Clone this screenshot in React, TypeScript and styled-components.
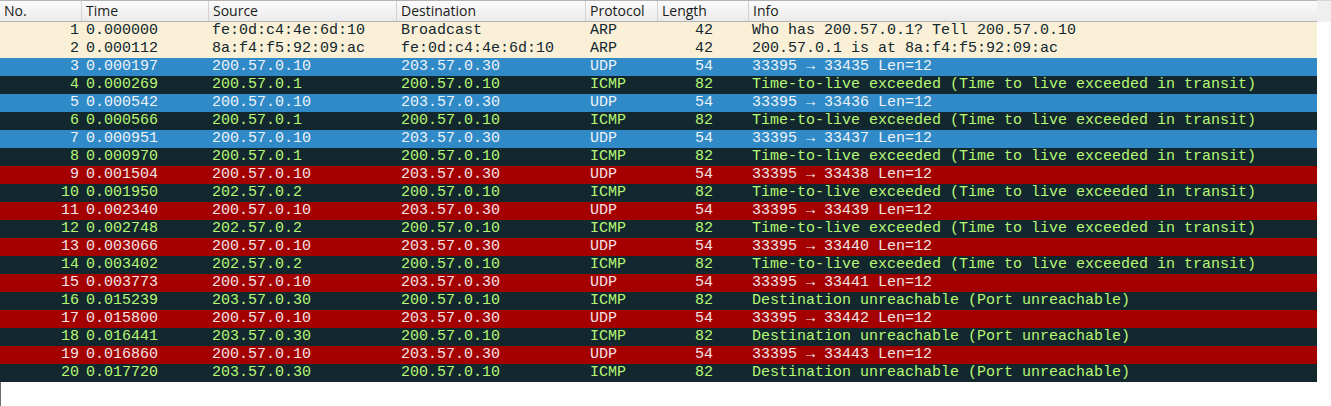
import React from 'react';
import styled, { createGlobalStyle } from 'styled-components';

const GlobalStyle = createGlobalStyle`
  html, body {
    margin: 0;
    padding: 0;
    background: #ffffff;
  }
`;

type Kind = 'arp' | 'udp' | 'icmp' | 'ttl';

const palette: Record<Kind, { bg: string; fg: string }> = {
  arp: { bg: '#faf0d7', fg: '#12272e' },
  udp: { bg: '#2f8ac7', fg: '#eef3f8' },
  icmp: { bg: '#12272e', fg: '#b7f774' },
  ttl: { bg: '#a40000', fg: '#f3e3e6' },
};

const columns = '82px 127px 188px 189px 72px 91px 568px';

const Page = styled.div`
  width: 1331px;
  height: 406px;
  display: flex;
  flex-direction: column;
  background: #ffffff;
`;

const HeaderBar = styled.div`
  display: flex;
  height: 22px;
`;

const HeaderRow = styled.div`
  display: grid;
  grid-template-columns: ${columns};
  width: 1317px;
  box-sizing: border-box;
  border-top: 1px solid #b3b3b3;
  border-bottom: 1px solid #b3b3b3;
  background: linear-gradient(#fbfbfb, #ebebeb);
`;

const HeaderFiller = styled.div`
  flex: 1;
  background: #efefef;
  border-top: 1px solid #d6d6d6;
`;

const HeaderCell = styled.div`
  font-family: 'Open Sans', 'Noto Sans', sans-serif;
  font-size: 14px;
  color: #1a1a1a;
  line-height: 20px;
  padding-left: 4px;
  border-right: 1px solid #d2d2d2;
  white-space: nowrap;
  overflow: hidden;
  &:last-child {
    border-right: none;
  }
`;

const Body = styled.div`
  flex: 1;
  border-left: 1px solid #6f6f6f;
  margin-right: 14px;
`;

const PacketRow = styled.div<{ $kind: Kind }>`
  display: grid;
  grid-template-columns: ${columns};
  height: 18px;
  margin-left: -1px;
  background: ${(p) => palette[p.$kind].bg};
  color: ${(p) => palette[p.$kind].fg};
  font-family: 'Liberation Mono', 'DejaVu Sans Mono', monospace;
  font-size: 15px;
  line-height: 18px;
`;

const Cell = styled.div<{ $align?: 'left' | 'right'; $pl?: number; $pr?: number }>`
  text-align: ${(p) => p.$align || 'left'};
  padding-left: ${(p) => p.$pl ?? 3}px;
  padding-right: ${(p) => p.$pr ?? 0}px;
  white-space: nowrap;
  overflow: hidden;
`;

interface Packet {
  no: number;
  time: string;
  src: string;
  dst: string;
  proto: string;
  len: number;
  info: string;
  kind: Kind;
}

const exceeded = 'Time-to-live exceeded (Time to live exceeded in transit)';
const unreachable = 'Destination unreachable (Port unreachable)';
const udp = (port: number) => `33395 → ${port} Len=12`;

const packets: Packet[] = [
  { no: 1, time: '0.000000', src: 'fe:0d:c4:4e:6d:10', dst: 'Broadcast', proto: 'ARP', len: 42, info: 'Who has 200.57.0.1? Tell 200.57.0.10', kind: 'arp' },
  { no: 2, time: '0.000112', src: '8a:f4:f5:92:09:ac', dst: 'fe:0d:c4:4e:6d:10', proto: 'ARP', len: 42, info: '200.57.0.1 is at 8a:f4:f5:92:09:ac', kind: 'arp' },
  { no: 3, time: '0.000197', src: '200.57.0.10', dst: '203.57.0.30', proto: 'UDP', len: 54, info: udp(33435), kind: 'udp' },
  { no: 4, time: '0.000269', src: '200.57.0.1', dst: '200.57.0.10', proto: 'ICMP', len: 82, info: exceeded, kind: 'icmp' },
  { no: 5, time: '0.000542', src: '200.57.0.10', dst: '203.57.0.30', proto: 'UDP', len: 54, info: udp(33436), kind: 'udp' },
  { no: 6, time: '0.000566', src: '200.57.0.1', dst: '200.57.0.10', proto: 'ICMP', len: 82, info: exceeded, kind: 'icmp' },
  { no: 7, time: '0.000951', src: '200.57.0.10', dst: '203.57.0.30', proto: 'UDP', len: 54, info: udp(33437), kind: 'udp' },
  { no: 8, time: '0.000970', src: '200.57.0.1', dst: '200.57.0.10', proto: 'ICMP', len: 82, info: exceeded, kind: 'icmp' },
  { no: 9, time: '0.001504', src: '200.57.0.10', dst: '203.57.0.30', proto: 'UDP', len: 54, info: udp(33438), kind: 'ttl' },
  { no: 10, time: '0.001950', src: '202.57.0.2', dst: '200.57.0.10', proto: 'ICMP', len: 82, info: exceeded, kind: 'icmp' },
  { no: 11, time: '0.002340', src: '200.57.0.10', dst: '203.57.0.30', proto: 'UDP', len: 54, info: udp(33439), kind: 'ttl' },
  { no: 12, time: '0.002748', src: '202.57.0.2', dst: '200.57.0.10', proto: 'ICMP', len: 82, info: exceeded, kind: 'icmp' },
  { no: 13, time: '0.003066', src: '200.57.0.10', dst: '203.57.0.30', proto: 'UDP', len: 54, info: udp(33440), kind: 'ttl' },
  { no: 14, time: '0.003402', src: '202.57.0.2', dst: '200.57.0.10', proto: 'ICMP', len: 82, info: exceeded, kind: 'icmp' },
  { no: 15, time: '0.003773', src: '200.57.0.10', dst: '203.57.0.30', proto: 'UDP', len: 54, info: udp(33441), kind: 'ttl' },
  { no: 16, time: '0.015239', src: '203.57.0.30', dst: '200.57.0.10', proto: 'ICMP', len: 82, info: unreachable, kind: 'icmp' },
  { no: 17, time: '0.015800', src: '200.57.0.10', dst: '203.57.0.30', proto: 'UDP', len: 54, info: udp(33442), kind: 'ttl' },
  { no: 18, time: '0.016441', src: '203.57.0.30', dst: '200.57.0.10', proto: 'ICMP', len: 82, info: unreachable, kind: 'icmp' },
  { no: 19, time: '0.016860', src: '200.57.0.10', dst: '203.57.0.30', proto: 'UDP', len: 54, info: udp(33443), kind: 'ttl' },
  { no: 20, time: '0.017720', src: '203.57.0.30', dst: '200.57.0.10', proto: 'ICMP', len: 82, info: unreachable, kind: 'icmp' },
];

const headers = ['No.', 'Time', 'Source', 'Destination', 'Protocol', 'Length', 'Info'];

const App = () => {
  return (
    <Page>
      <GlobalStyle />
      <HeaderBar>
        <HeaderRow>
          {headers.map((h) => (
            <HeaderCell key={h}>{h}</HeaderCell>
          ))}
        </HeaderRow>
        <HeaderFiller />
      </HeaderBar>
      <Body>
        {packets.map((p) => (
          <PacketRow key={p.no} $kind={p.kind}>
            <Cell $align="right" $pl={0} $pr={3}>{p.no}</Cell>
            <Cell $pl={4}>{p.time}</Cell>
            <Cell $pl={3}>{p.src}</Cell>
            <Cell $pl={4}>{p.dst}</Cell>
            <Cell $pl={4}>{p.proto}</Cell>
            <Cell $align="right" $pl={0} $pr={36}>{p.len}</Cell>
            <Cell $pl={3}>{p.info}</Cell>
          </PacketRow>
        ))}
      </Body>
    </Page>
  );
};

export default App;
